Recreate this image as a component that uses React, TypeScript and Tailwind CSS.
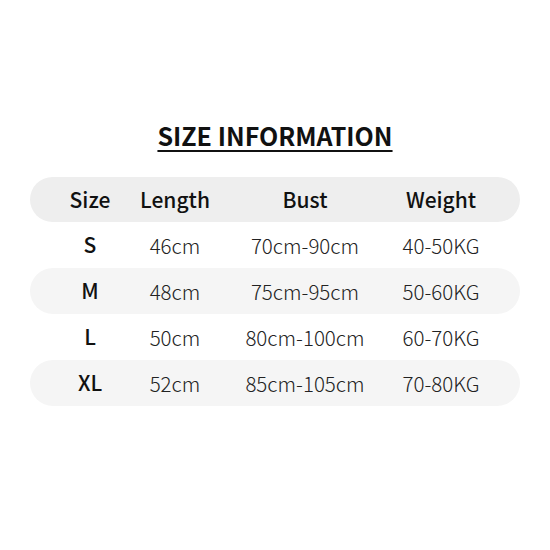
import React from "react";

const rows = [
  { s: "S", l: "46cm", b: "70cm-90cm", w: "40-50KG", bg: false },
  { s: "M", l: "48cm", b: "75cm-95cm", w: "50-60KG", bg: true },
  { s: "L", l: "50cm", b: "80cm-100cm", w: "60-70KG", bg: false },
  { s: "XL", l: "52cm", b: "85cm-105cm", w: "70-80KG", bg: true },
];

const Cell = ({ children, className = "" }: { children: React.ReactNode; className?: string }) => (
  <div className={`flex justify-center items-center whitespace-nowrap ${className}`}>{children}</div>
);

export default function App() {
  return (
    <div
      className="w-[550px] h-[550px] bg-white flex flex-col items-center text-[#111]"
      style={{ fontFamily: '"Noto Sans CJK SC", "Noto Sans", sans-serif' }}
    >
      <div className="mt-[117px] text-[25px] leading-[37px] font-bold underline underline-offset-[4px] decoration-[2px]">
        SIZE INFORMATION
      </div>
      <div className="mt-[23px] w-[490px] flex flex-col">
        <div className="grid grid-cols-[120px_50px_210px_62px] h-[45px] rounded-full bg-[#eeeeee] text-[21px] font-medium">
          <Cell>Size</Cell>
          <Cell>Length</Cell>
          <Cell>Bust</Cell>
          <Cell>Weight</Cell>
        </div>
        {rows.map((r) => (
          <div
            key={r.s}
            className={`grid grid-cols-[120px_50px_210px_62px] h-[46px] rounded-full text-[20.5px] font-light text-[#222] ${
              r.bg ? "bg-[#f5f5f5]" : ""
            }`}
          >
            <Cell className="font-medium text-[21px] text-[#111]">{r.s}</Cell>
            <Cell>{r.l}</Cell>
            <Cell>{r.b}</Cell>
            <Cell>{r.w}</Cell>
          </div>
        ))}
      </div>
    </div>
  );
}
